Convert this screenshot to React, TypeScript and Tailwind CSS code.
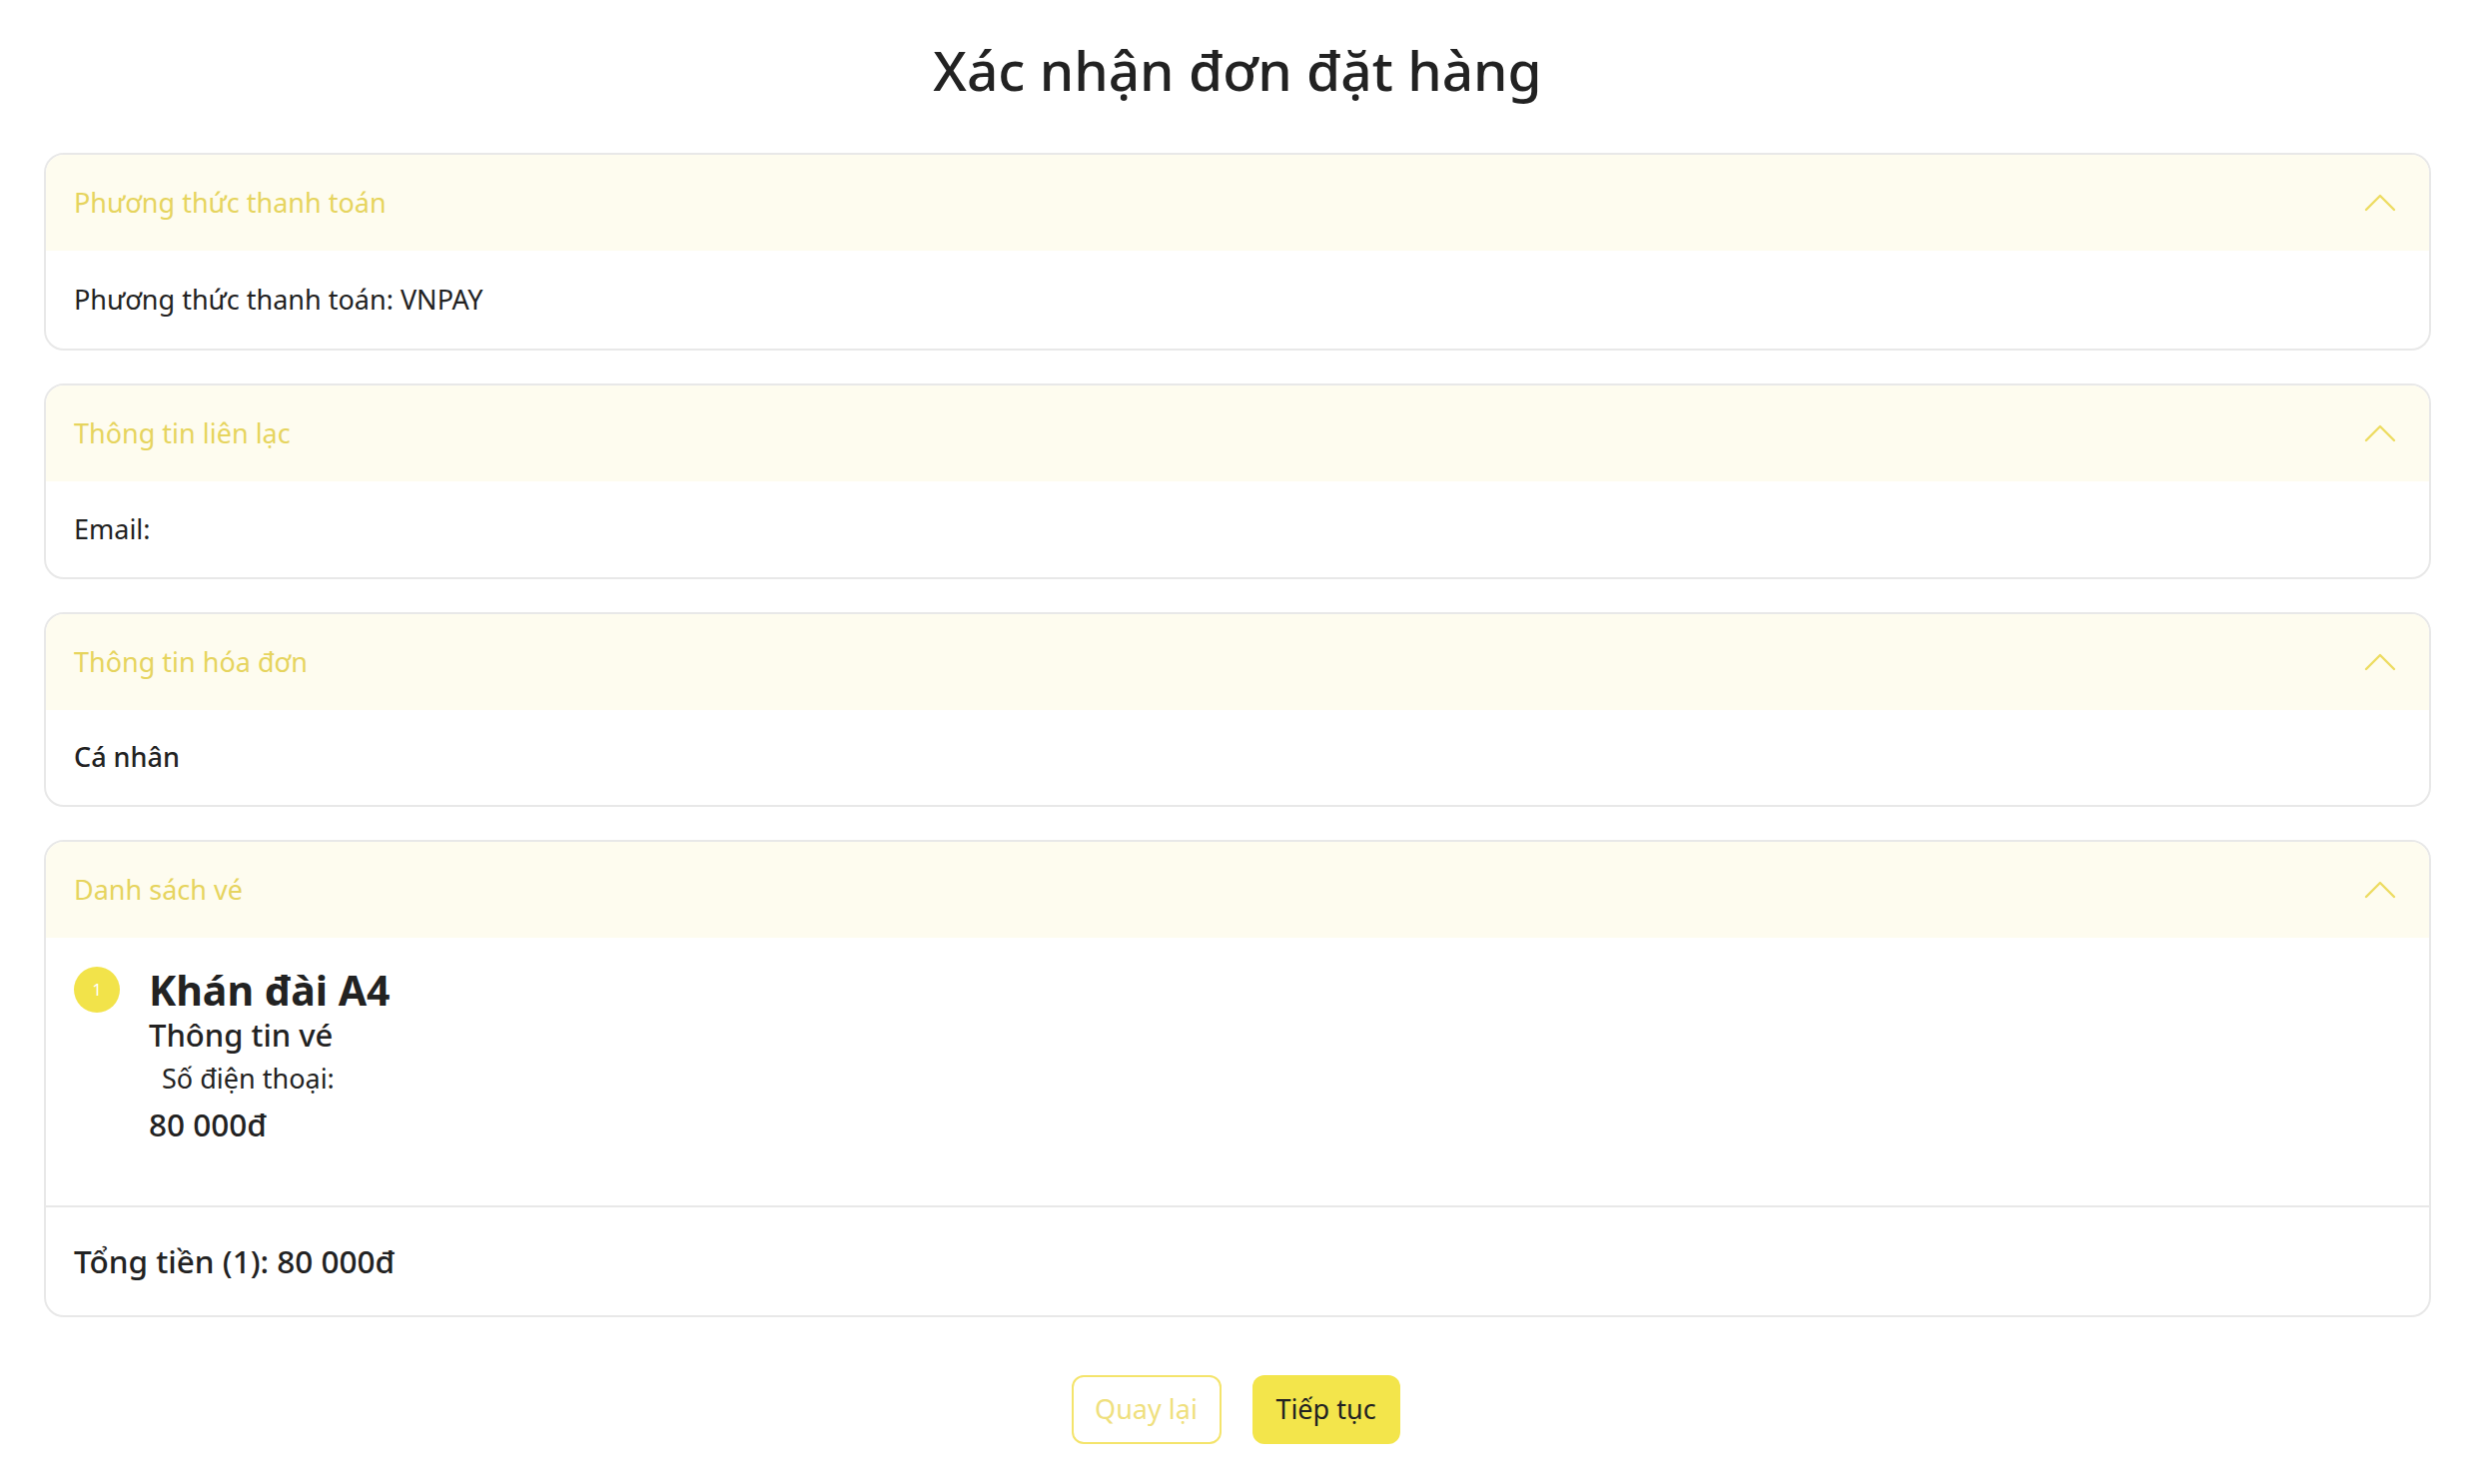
import { ReactNode } from "react";

function Chevron() {
  return (
    <svg width="32" height="20" viewBox="0 0 32 20" fill="none">
      <polyline points="2,17 16,3 30,17" stroke="#eddc62" strokeWidth="2.4" strokeLinecap="round" strokeLinejoin="round" />
    </svg>
  );
}

function Section({ title, children, extra }: { title: string; children: ReactNode; extra?: ReactNode }) {
  return (
    <div className="relative border-2 border-[#e8e8e8] rounded-[20px] overflow-hidden bg-white">
      <div className="h-[96px] bg-[#fefcef] pl-[28px] pr-[29px] flex items-center justify-between">
        <span className="text-[27px] text-[#e6d45e]">{title}</span>
        <div className="pr-[4px]">
          <Chevron />
        </div>
      </div>
      {children}
      {extra}
    </div>
  );
}

export default function App() {
  return (
    <div className="min-h-screen bg-white px-[44px] text-[#222]" style={{ fontFamily: '"Noto Sans", "Open Sans", sans-serif' }}>
      <h1 className="pt-[24px] text-center text-[55px] leading-[92px] font-medium text-[#222]">Xác nhận đơn đặt hàng</h1>

      <div className="mt-[37px] flex flex-col gap-[33px]">
        <Section
          title="Phương thức thanh toán"
          extra={<div className="absolute bottom-[-2px] left-[955px] w-[52px] h-[4px] bg-white" />}
        >
          <div className="h-[98px] px-[28px] flex items-center text-[27px]">Phương thức thanh toán: VNPAY</div>
        </Section>

        <Section title="Thông tin liên lạc">
          <div className="h-[96px] px-[28px] flex items-center text-[27px]">Email:</div>
        </Section>

        <Section title="Thông tin hóa đơn">
          <div className="h-[95px] px-[28px] flex items-center text-[27px] font-medium">Cá nhân</div>
        </Section>

        <Section title="Danh sách vé">
          <div className="h-[268px] px-[28px] pt-[29px] flex gap-[29px]">
            <div className="w-[46px] h-[46px] rounded-full bg-[#f2e34a] text-white text-[17px] flex items-center justify-center shrink-0">1</div>
            <div className="flex flex-col">
              <div className="text-[41px] leading-[46px] font-bold">Khán đài A4</div>
              <div className="text-[31px] leading-[44px] font-medium">Thông tin vé</div>
              <div className="pl-[13px] text-[27px] leading-[44px]">Số điện thoại:</div>
              <div className="text-[31.5px] leading-[48px] font-medium">80 000đ</div>
            </div>
          </div>
          <div className="border-t-2 border-[#e8e8e8] h-[110px] px-[28px] flex items-center text-[31.5px] font-medium">
            Tổng tiền (1): 80 000đ
          </div>
        </Section>
      </div>

      <div className="mt-[58px] flex justify-center gap-[31px] pr-[4px] pb-[40px]">
        <button className="w-[150px] h-[69px] rounded-[12px] border-2 border-[#f4e46c] text-[#efe07e] text-[27px]">Quay lại</button>
        <button className="w-[148px] h-[69px] rounded-[12px] bg-[#f3e54b] text-[#222] text-[27px]">Tiếp tục</button>
      </div>
    </div>
  );
}
